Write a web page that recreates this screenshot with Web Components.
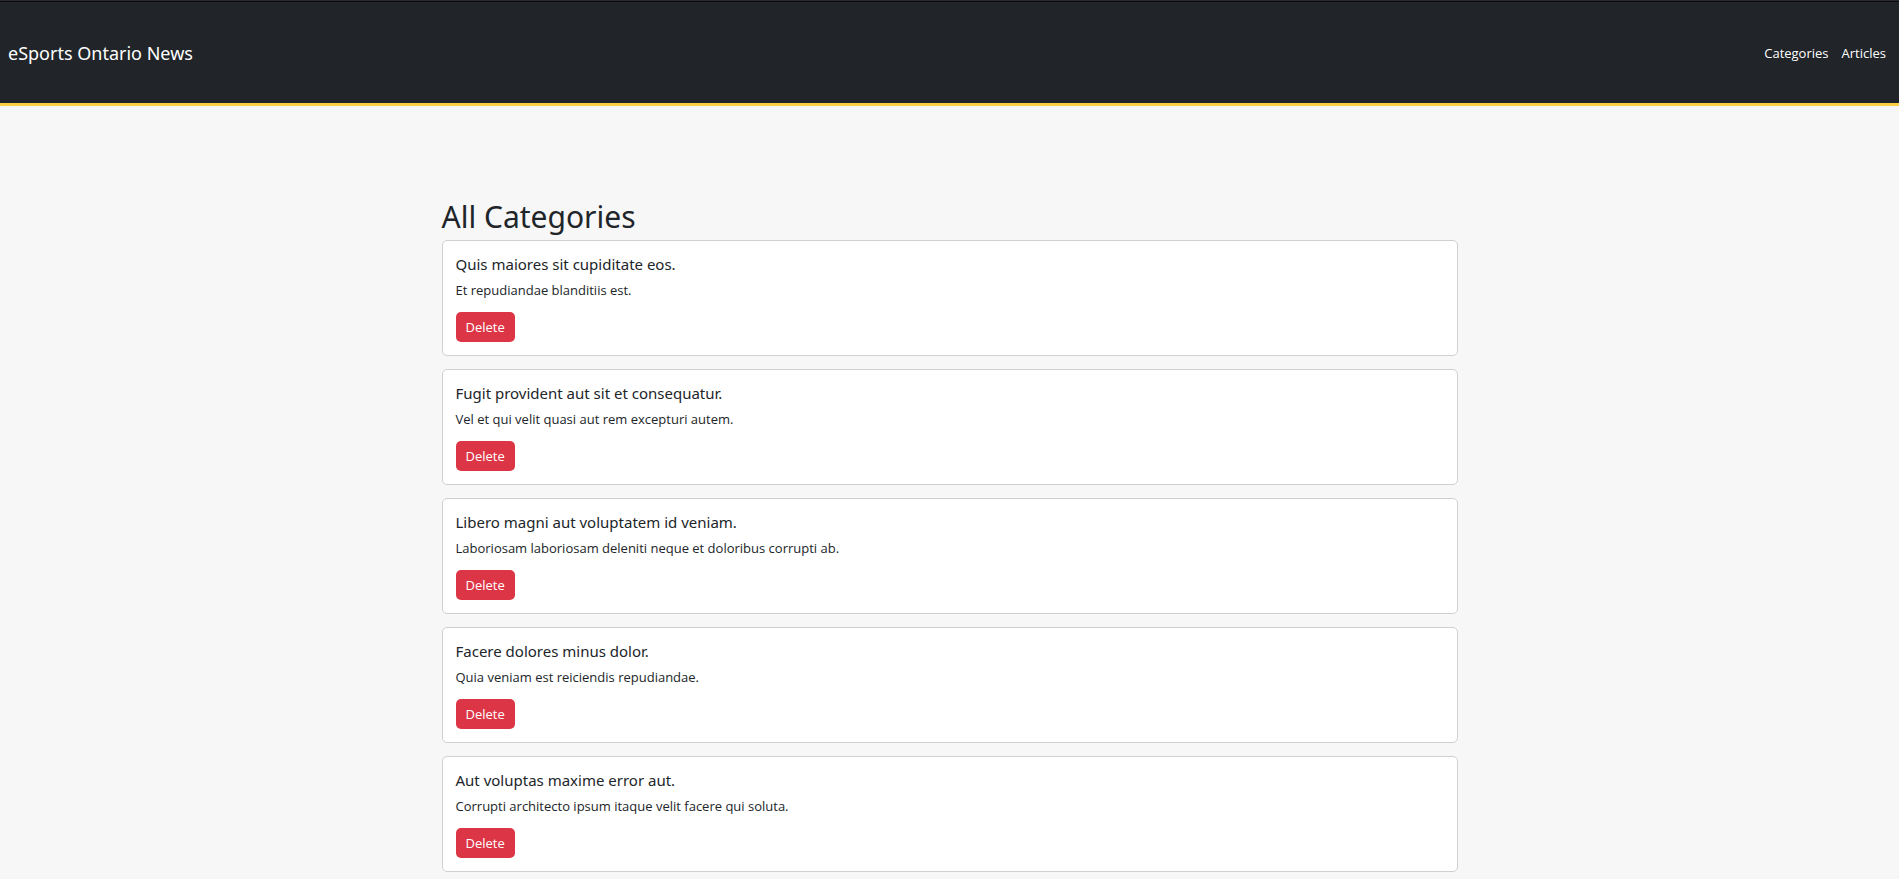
<!DOCTYPE html>
<html lang="en">
<head>
<meta charset="utf-8">
<title>eSports Ontario News</title>
<style>
  body {
    margin: 0;
    background: #f7f7f7;
    color: #212529;
    font: 13px/20px "Open Sans", "Noto Sans", sans-serif;
  }
</style>
</head>
<body>
<site-header>
  <span slot="brand">eSports Ontario News</span>
  <nav-link href="#categories">Categories</nav-link>
  <nav-link href="#articles">Articles</nav-link>
</site-header>
<category-list>
  <span slot="heading">All Categories</span>
  <category-card><span slot="name">Quis maiores sit cupiditate eos.</span>Et repudiandae blanditiis est.</category-card>
  <category-card><span slot="name">Fugit provident aut sit et consequatur.</span>Vel et qui velit quasi aut rem excepturi autem.</category-card>
  <category-card><span slot="name">Libero magni aut voluptatem id veniam.</span>Laboriosam laboriosam deleniti neque et doloribus corrupti ab.</category-card>
  <category-card><span slot="name">Facere dolores minus dolor.</span>Quia veniam est reiciendis repudiandae.</category-card>
  <category-card><span slot="name">Aut voluptas maxime error aut.</span>Corrupti architecto ipsum itaque velit facere qui soluta.</category-card>
</category-list>
<script>
class BaseElement extends HTMLElement {
  constructor() {
    super();
    this.attachShadow({ mode: "open" }).innerHTML = this.constructor.markup;
  }
}

customElements.define("site-header", class extends BaseElement {
  static markup = `
    <style>
      :host { display: block; border-top: 1px solid #2b2a33; }
      header {
        display: flex; align-items: center; justify-content: space-between;
        box-sizing: border-box; min-height: 105px; padding: 0 13px 0 8px;
        background: #212529; color: #fff;
        border-top: 1px solid #0c0c0d; border-bottom: 3px solid #ffd043;
      }
      a { color: inherit; text-decoration: none; font: 18px/28px "Noto Sans", sans-serif; }
      nav { display: flex; gap: 13px; }
    </style>
    <header><a href="#home"><slot name="brand"></slot></a><nav><slot></slot></nav></header>`;
});

customElements.define("nav-link", class extends BaseElement {
  static markup = `
    <style>
      :host { display: block; }
      a { color: inherit; text-decoration: none; }
    </style>
    <a><slot></slot></a>`;
  connectedCallback() {
    this.shadowRoot.querySelector("a").href = this.getAttribute("href");
  }
});

customElements.define("category-list", class extends BaseElement {
  static markup = `
    <style>
      :host { display: block; }
      main { box-sizing: content-box; max-width: 1016px; margin: 0 auto; padding: 91px 13px 0; }
      h1 { margin: 0 0 3px; font: 400 30px/40px "Noto Sans", sans-serif; }
      section { display: grid; gap: 13px; }
    </style>
    <main><h1><slot name="heading"></slot></h1><section><slot></slot></section></main>`;
});

customElements.define("category-card", class extends BaseElement {
  static markup = `
    <style>
      :host { display: block; }
      article { padding: 13px; background: #fff; border: 1px solid #d0d0d1; border-radius: 5px; }
      h2 { margin: 0 0 6px; font: 400 15px/20px "Noto Sans", sans-serif; }
      p { margin: 0 0 12px; }
      button {
        display: block; padding: 5px 10px; border: 0; border-radius: 5px;
        background: #dc3545; color: #fff; font: inherit; cursor: pointer;
      }
    </style>
    <article><h2><slot name="name"></slot></h2><p><slot></slot></p><button type="button">Delete</button></article>`;
});
</script>
</body>
</html>
